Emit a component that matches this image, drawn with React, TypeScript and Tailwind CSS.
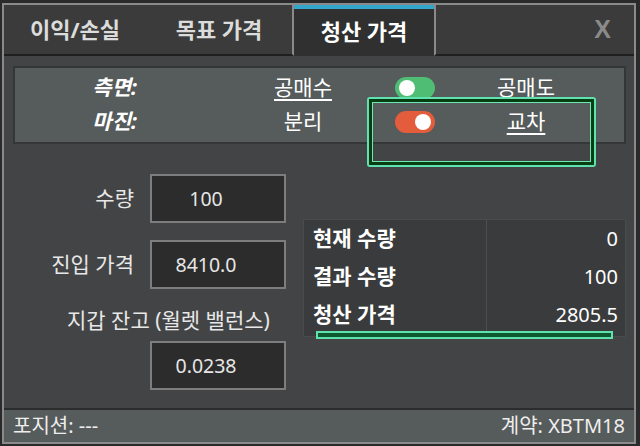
import React from "react";

const font = { fontFamily: '"Noto Sans", "Noto Sans CJK KR", sans-serif' };

function Toggle({ on, color }: { on: boolean; color: string }) {
  return (
    <div className={`w-[40px] h-[22px] rounded-full flex items-center px-[4px] ${color} ${on ? "justify-end" : "justify-start"}`}>
      <div className="w-[16px] h-[16px] rounded-full bg-white" />
    </div>
  );
}

function Field({ value }: { value: string }) {
  return (
    <div className="w-[136px] h-[49px] bg-[#2c2c2c] border-2 border-[#7d7d7d] flex items-center justify-center pr-[24px] text-[19.5px] text-[#e6e6e6]">
      {value}
    </div>
  );
}

export default function App() {
  return (
    <div className="relative w-[640px] h-[446px] bg-[#2a2a2a] overflow-hidden" style={font}>
      <div className="absolute left-[2px] top-[3px] w-[634px] h-[441px] border-2 border-[#8a8a8a] flex flex-col">
        {/* tab bar */}
        <div className="h-[51px] flex shrink-0">
          <div className="w-[290px] bg-[#3a3b3a] border-r-2 border-r-[#8a8a8a] border-b-2 border-b-[#1f1f1f] flex items-center text-[22px] font-bold text-[#dcdcdc]">
            <div className="w-[142px] text-center">이익/손실</div>
            <div className="w-[146px] text-center">목표 가격</div>
          </div>
          <div className="w-[140px] bg-[#2f302f] border-t-4 border-t-[#33a7cb] flex items-center justify-center text-[22px] font-bold text-white pb-[2px]">
            청산 가격
          </div>
          <div className="flex-1 bg-[#3a3b3a] border-l-2 border-l-[#8a8a8a] border-b-2 border-b-[#1f1f1f] flex items-center justify-end pr-[23px] text-[25px] font-bold text-[#8a8a8a]" style={{ fontFamily: '"Liberation Sans", sans-serif' }}>
            X
          </div>
        </div>

        {/* content */}
        <div className="flex-1 bg-[#434445] pl-[9px] pr-[8px] pt-[10px] flex flex-col">
          <div className="h-[78px] bg-[#565b5b] border-2 border-[#353737] pt-[3px] text-[21px] text-white">
            <div className="h-[34px] flex items-center">
              <div className="w-[122px] text-right italic font-bold">측면:</div>
              <div className="ml-[106px] w-[120px] text-center underline underline-offset-4">공매수</div>
              <div className="ml-[32px]"><Toggle on={false} color="bg-[#4fbd73]" /></div>
              <div className="ml-[31px] w-[120px] text-center">공매도</div>
            </div>
            <div className="h-[34px] flex items-center">
              <div className="w-[122px] text-right italic font-bold">마진:</div>
              <div className="ml-[106px] w-[120px] text-center">분리</div>
              <div className="ml-[32px]"><Toggle on={true} color="bg-[#e35d3c]" /></div>
              <div className="ml-[31px] w-[120px] text-center underline underline-offset-4">교차</div>
            </div>
          </div>

          <div className="flex mt-[30px]">
            <div className="w-[286px] flex flex-col text-[21px] text-[#e8e8e8]">
              <div className="flex items-center">
                <div className="w-[121px] text-right">수량</div>
                <div className="ml-[16px]"><Field value="100" /></div>
              </div>
              <div className="flex items-center mt-[17px]">
                <div className="w-[121px] text-right">진입 가격</div>
                <div className="ml-[16px]"><Field value="8410.0" /></div>
              </div>
              <div className="mt-[16px] pl-[54px] leading-[30px] whitespace-nowrap">지갑 잔고 (월렛 밸런스)</div>
              <div className="ml-[137px] mt-[6px]"><Field value="0.0238" /></div>
            </div>
            <div className="ml-[4px] mt-[45px] w-[323px] h-[118px] bg-[#3a3b3c] border border-[#4a4b4b] flex text-white">
              <div className="w-[182px] flex flex-col font-bold pl-[9px] text-[21px]">
                <div className="h-[38px] flex items-center">현재 수량</div>
                <div className="h-[38px] flex items-center">결과 수량</div>
                <div className="h-[38px] flex items-center">청산 가격</div>
              </div>
              <div className="flex-1 border-l border-[#4d4e4e] flex flex-col items-end pr-[7px] text-[20px]">
                <div className="h-[38px] flex items-center">0</div>
                <div className="h-[38px] flex items-center">100</div>
                <div className="h-[38px] flex items-center">2805.5</div>
              </div>
            </div>
          </div>
        </div>

        {/* footer */}
        <div className="h-[34px] shrink-0 bg-[#565b5b] border-t-2 border-[#2b2c2c] flex items-center justify-between pl-[9px] pr-[9px] text-[20px] text-[#eeeeee]">
          <span>포지션: ---</span>
          <span>계약: XBTM18</span>
        </div>
      </div>

      {/* highlight overlays */}
      <div className="absolute left-[367px] top-[97px] w-[229px] h-[70px] border-2 border-[#5fe2af] rounded-[3px]">
        <div className="w-full h-full border-[3px] border-[#093d12]">
          <div className="w-full h-full border border-[#6ee8b7]" />
        </div>
      </div>
      <div className="absolute left-[316px] top-[331px] w-[297px] h-[8px] border-2 border-[#5fe2af] bg-[#0d5a30]" />
    </div>
  );
}
